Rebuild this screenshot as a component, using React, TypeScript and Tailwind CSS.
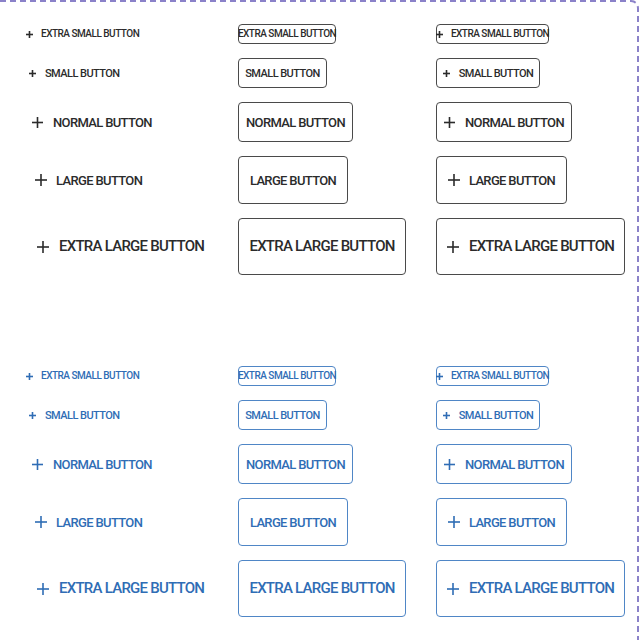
type Size = {
  label: string;
  h: string;
  px: string;
  text: string;
  icon: number;
  gap: string;
  w: string;
  wi: string;
};

// tight tracking and smaller type stand in for the condensed face of the design
const sizes: Size[] = [
  { label: "EXTRA SMALL BUTTON", h: "h-[20px]", px: "px-[6px]", text: "text-[10px]", icon: 7, gap: "gap-[8px]", w: "w-[98px]", wi: "w-[113px]" },
  { label: "SMALL BUTTON", h: "h-[30px]", px: "px-[9px]", text: "text-[11px]", icon: 7, gap: "gap-[9px]", w: "w-[89px]", wi: "w-[104px]" },
  { label: "NORMAL BUTTON", h: "h-[40px]", px: "px-[12px]", text: "text-[13px]", icon: 11, gap: "gap-[10px]", w: "w-[115px]", wi: "w-[136px]" },
  { label: "LARGE BUTTON", h: "h-[48px]", px: "px-[15px]", text: "text-[13px]", icon: 12, gap: "gap-[9px]", w: "w-[110px]", wi: "w-[131px]" },
  { label: "EXTRA LARGE BUTTON", h: "h-[57px]", px: "px-[17px]", text: "text-[15px]", icon: 12, gap: "gap-[10px]", w: "w-[168px]", wi: "w-[189px]" },
];

const PlusIcon = ({ size }: { size: number }) => (
  <svg width={size} height={size} viewBox={`0 0 ${size} ${size}`} className="shrink-0">
    <line x1={size / 2} y1={0} x2={size / 2} y2={size} stroke="currentColor" strokeWidth={1.6} />
    <line x1={0} y1={size / 2} x2={size} y2={size / 2} stroke="currentColor" strokeWidth={1.6} />
  </svg>
);

const Btn = ({
  s,
  outlined,
  withIcon,
  blue,
}: {
  s: Size;
  outlined: boolean;
  withIcon: boolean;
  blue: boolean;
}) => {
  const border = outlined
    ? blue
      ? "border-[#4f86c6]"
      : "border-[#4a4a4a]"
    : "border-transparent";
  const color = blue ? "text-[#2f6db5]" : "text-[#2b2b2b]";
  const width = outlined ? (withIcon ? s.wi : s.w) : "";
  return (
    <button
      className={`flex items-center ${outlined ? "justify-center" : "justify-start"} ${width} ${s.h} ${s.px} ${s.gap} ${s.text} ${color} border ${border} rounded-[4px] bg-white font-medium leading-none whitespace-nowrap tracking-tighter font-['Roboto',sans-serif]`}
    >
      {withIcon && <PlusIcon size={s.icon} />}
      <span>{s.label}</span>
    </button>
  );
};

const Section = ({ blue }: { blue: boolean }) => (
  <div className="flex flex-col gap-[14px]">
    {sizes.map((s) => (
      <div key={s.label} className="grid grid-cols-[219px_198px_1fr] items-center">
        <div className="flex">
          <Btn s={s} outlined={false} withIcon blue={blue} />
        </div>
        <div className="flex">
          <Btn s={s} outlined withIcon={false} blue={blue} />
        </div>
        <div className="flex">
          <Btn s={s} outlined withIcon blue={blue} />
        </div>
      </div>
    ))}
  </div>
);

export default function App() {
  return (
    <div className="w-[640px] h-[640px] overflow-hidden bg-white">
      <div className="w-[639px] h-[700px] border-t-2 border-r-2 border-dashed border-[#8b82c9] rounded-tr-[8px] pt-[22px] pl-[19px] flex flex-col gap-[91px]">
        <Section blue={false} />
        <Section blue />
      </div>
    </div>
  );
}
